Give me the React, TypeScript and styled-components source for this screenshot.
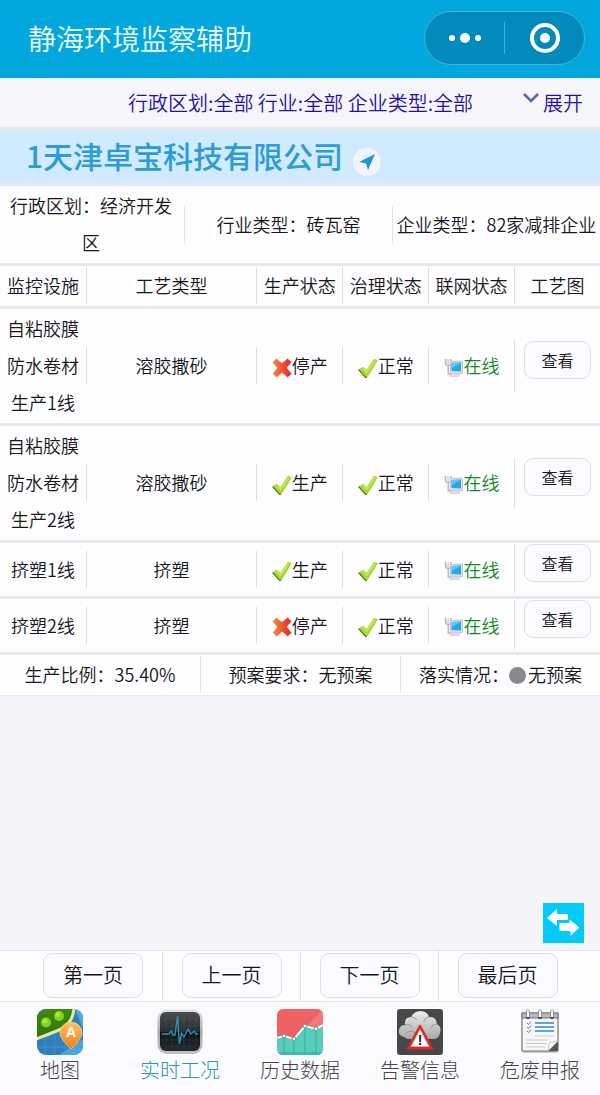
import React from "react";
import styled, { createGlobalStyle } from "styled-components";

const GlobalStyle = createGlobalStyle`
  * { box-sizing: border-box; }
  body {
    margin: 0;
    background: #f5f5f9;
    color: #17171a;
    font-family: "Noto Sans CJK SC", "Noto Sans", sans-serif;
    font-size: 18px;
    font-weight: 350;
    line-height: 37px;
  }
  button {
    font: inherit;
    color: inherit;
    padding: 0;
    cursor: pointer;
  }
  svg { display: block; flex: none; }
`;

const Page = styled.div`
  min-height: 100vh;
  display: flex;
  flex-direction: column;
`;

const Header = styled.header`
  height: 78px;
  padding: 0 15px 2px 28px;
  display: flex;
  align-items: center;
  justify-content: space-between;
  background: #02a7dd;
  color: #effaff;
`;

const AppName = styled.h1`
  margin: 0;
  font-size: 28px;
  font-weight: 350;
`;

const Capsule = styled.div`
  width: 161px;
  height: 54px;
  display: flex;
  align-items: center;
  border: 1px solid #3fb5dc;
  border-radius: 27px;
  background: #028abd;
`;

const CapsuleButton = styled.button`
  flex: 1;
  height: 32px;
  display: flex;
  align-items: center;
  justify-content: center;
  border: 0;
  background: none;

  & + & {
    border-left: 1px solid #3fb0d8;
  }
`;

const FilterBar = styled.div`
  height: 52px;
  padding: 0 17px 0 128px;
  display: flex;
  align-items: center;
  justify-content: space-between;
  border-bottom: 3px solid #e7e8ee;
  background: #f6f6fa;
  color: #2410a4;
  font-size: 20px;
  white-space: nowrap;
`;

const ExpandButton = styled.button`
  display: flex;
  align-items: center;
  gap: 4px;
  border: 0;
  background: none;

  svg { margin-bottom: 10px; }
`;

const CompanyBar = styled.div`
  height: 56px;
  padding: 0 26px 2px;
  display: flex;
  align-items: center;
  gap: 10px;
  border-bottom: 3px solid #e7e9ee;
  background: #d0eafe;
`;

const CompanyName = styled.h2`
  margin: 0;
  color: #2c9bd8;
  font-size: 30px;
  font-weight: 500;
`;

const LocateButton = styled.button`
  width: 28px;
  height: 28px;
  margin-top: 12px;
  display: flex;
  align-items: center;
  justify-content: center;
  border: 0;
  border-radius: 50%;
  background: #eff5fa;
`;

const InfoRow = styled.div<{ $columns: string; $line: number }>`
  padding: 1px 0 2px;
  display: grid;
  grid-template-columns: ${(p) => p.$columns};
  align-items: center;
  border-bottom: ${(p) => p.$line}px solid #e8e7eb;
  background: #fefdff;
`;

const InfoCell = styled.div<{ $wraps?: boolean }>`
  min-height: 37px;
  padding: ${(p) => (p.$wraps ? "0 8px 0 6px" : "0")};
  display: flex;
  align-items: center;
  justify-content: center;
  text-align: center;

  & + & {
    border-left: 1px solid #e3e2e7;
    white-space: nowrap;
  }
`;

const Dot = styled.span`
  width: 17px;
  height: 17px;
  margin: 2px 2px 0 0;
  border-radius: 50%;
  background: #89898c;
`;

const Table = styled.table`
  width: 100%;
  table-layout: fixed;
  border-collapse: collapse;
  background: #fefdff;

  tr { border-bottom: 3px solid #e8e7eb; }
  th, td {
    padding: 1px 0 2px;
    font-weight: 350;
    vertical-align: middle;
    text-align: center;
  }
`;

const CellBox = styled.div<{ $color?: string }>`
  display: flex;
  justify-content: center;
  align-items: center;
  color: ${(p) => p.$color ?? "inherit"};
  white-space: nowrap;

  td + td > &, th + th > & {
    border-left: 1px solid #dfdee3;
  }
  svg { margin-top: 4px; }
`;

const FacilityName = styled.div`
  padding: 0 6px;
`;

const ViewCell = styled(CellBox)`
  height: 50px;
  align-items: flex-start;
`;

const SoftButton = styled.button<{ $size: "small" | "large" }>`
  width: ${(p) => (p.$size === "small" ? 67 : 100)}px;
  height: ${(p) => (p.$size === "small" ? 38 : 45)}px;
  padding-bottom: ${(p) => (p.$size === "small" ? 0 : 2)}px;
  border: 1px solid #e0dfe6;
  border-radius: 9px;
  background: #fbfafe;
  font-size: ${(p) => (p.$size === "small" ? 16 : 20)}px;
`;

const Blank = styled.main`
  flex: 1;
  padding: 0 16px 7px;
  display: flex;
  align-items: flex-end;
  justify-content: flex-end;
`;

const SwapButton = styled.button`
  width: 41px;
  height: 40px;
  display: flex;
  align-items: center;
  justify-content: center;
  border: 0;
  background: #02cbf9;
`;

const Pager = styled.nav`
  padding: 0 24px;
  display: grid;
  grid-template-columns: repeat(4, 1fr);
  border-top: 1px solid #e5e4e9;
  border-bottom: 1px solid #e5e4e9;
  background: #fefdff;
`;

const PagerCell = styled.div`
  height: 50px;
  padding-bottom: 1px;
  display: flex;
  align-items: center;
  justify-content: center;

  & + & { border-left: 1px solid #e3e2e7; }
`;

const TabBar = styled.nav`
  padding: 7px 0 10px;
  display: grid;
  grid-template-columns: repeat(5, 1fr);
  background: #fbfafd;
`;

const Tab = styled.a<{ $active?: boolean }>`
  display: flex;
  flex-direction: column;
  align-items: center;
  color: ${(p) => (p.$active ? "#2c96b8" : "#454549")};
  font-size: 20px;
  font-weight: 300;
  line-height: 30px;
  text-decoration: none;
`;

const CrossIcon = () => (
  <svg width="20" height="20" viewBox="0 0 20 20" aria-hidden="true">
    <defs>
      <linearGradient id="cross" x1="0" x2="1">
        <stop offset="0" stopColor="#f28c4c" />
        <stop offset="1" stopColor="#e5261d" />
      </linearGradient>
    </defs>
    <path
      d="M.5 4.500 4.500 .5Q7 3.500 10 5 13 3 15.500 .5L19.500 4.200Q17 7 14.800 9.800 17 13 19.500 15.700L15.600 19.500Q12.500 16.500 10 14.800 7.500 17 4.700 19.500L.7 15.600Q3.500 12.500 5.300 10 3 7 .5 4.500Z"
      fill="url(#cross)"
    />
  </svg>
);

const CheckIcon = () => (
  <svg width="20" height="20" viewBox="0 0 20 20" aria-hidden="true">
    <path d="M.6 11.500 5 8.800 8.500 12 16 .8 19.800 2.300Q15 11 9.500 19L7.500 19.200Z" fill="#a6d92f" />
    <path d="M.6 11.500 7.500 19.300 9 19.300" fill="none" stroke="#4d7a22" strokeWidth="1.200" />
    <path d="M4.500 10.500 8.700 14.300 16.700 2.500" fill="none" stroke="#c3e85c" strokeWidth="1.600" />
  </svg>
);

const OnlineIcon = () => (
  <svg width="20" height="20" viewBox="0 0 20 20" aria-hidden="true">
    <path d="M1.500 1v4.500Q2 7.500 4.200 7.500T7 5.500V1M4.300 7.500V16H8" fill="none" stroke="#b8babf" strokeWidth="1.600" />
    <path d="M4.200 1v5" stroke="#d4d6da" strokeWidth="2" />
    <path d="M6.500 3.500 18.500 3v12.500L6.500 15Z" fill="#dfe3e8" stroke="#c3c7ce" />
    <path d="M7.500 5 17 4.500V13.500L7.500 13Z" fill="#27a7e8" />
    <path d="M7.500 5 17 4.500 7.500 10.500Z" fill="#63c7f4" />
    <path d="M5 16.500Q11 14.500 16 16.800L15 18.500H6Z" fill="#dddfe3" stroke="#c3c6cc" strokeWidth=".6" />
  </svg>
);

const MapIcon = () => (
  <svg width="46" height="46" viewBox="0 0 46 46" aria-hidden="true">
    <defs>
      <clipPath id="mapShape"><rect width="46" height="46" rx="9" /></clipPath>
      <linearGradient id="pin" x2="0" y2="1">
        <stop offset="0" stopColor="#fbc65e" />
        <stop offset="1" stopColor="#ef7a1c" />
      </linearGradient>
      <linearGradient id="land" x2="0" y2="1">
        <stop offset="0" stopColor="#3d8a12" />
        <stop offset="1" stopColor="#2e7410" />
      </linearGradient>
    </defs>
    <g clipPath="url(#mapShape)">
      <rect width="46" height="46" fill="#2f7fc0" />
      <path d="M22 46 46 30V46ZM38 0H46V20Z" fill="#4ba6dc" />
      <path d="M8 30V46M18 26V46M28 20V46M0 38H46" stroke="#5397ce" strokeWidth=".6" />
      <path d="M0 0H37Q36 15 22 21 10 26 0 30Z" fill="url(#land)" />
      <path d="M37-1Q36 15 22 21 10 26-1 30" fill="none" stroke="#ece89a" strokeWidth="3" />
      <circle cx="22" cy="7" r="5" fill="#85cf1e" />
      <circle cx="9" cy="13.500" r="5" fill="#85cf1e" />
      <circle cx="21" cy="5.500" r="2.500" fill="#a7e63c" />
      <circle cx="8" cy="12" r="2.500" fill="#a7e63c" />
    </g>
    <path d="M34 40Q23 30 23 24A11 11 0 0 1 45 24Q45 30 34 40Z" fill="url(#pin)" stroke="#f7d28b" strokeWidth=".7" />
    <text x="34" y="28" textAnchor="middle" fill="#fff" fontFamily="Liberation Sans, sans-serif" fontSize="14" fontWeight="700">A</text>
  </svg>
);

const PulseIcon = () => (
  <svg width="46" height="46" viewBox="0 0 46 46" aria-hidden="true">
    <defs>
      <linearGradient id="rim" x2="0" y2="1">
        <stop offset="0" stopColor="#e5e5e6" />
        <stop offset=".5" stopColor="#aaaaad" />
        <stop offset="1" stopColor="#c2c2c4" />
      </linearGradient>
      <linearGradient id="screen" x2="0" y2="1">
        <stop offset="0" stopColor="#4a4d50" />
        <stop offset=".5" stopColor="#282c2f" />
        <stop offset=".52" stopColor="#101417" />
        <stop offset="1" stopColor="#22282b" />
      </linearGradient>
    </defs>
    <rect x=".5" y=".5" width="45" height="44.500" rx="9" fill="url(#rim)" />
    <rect x="3" y="3" width="40" height="39" rx="6" fill="url(#screen)" />
    <path d="M9 4V41M15 4V41M21 4V41M27 4V41M33 4V41M39 4V41M4 10H42M4 17H42M4 31H42M4 37H42" stroke="#65717a" strokeWidth=".4" opacity=".5" />
    <path d="M5 25H12L14 22 16 26H18L20.500 7 22.500 35 24.500 24 27 28 31 20 34 25 37 22 39 25H41" fill="none" stroke="#2898b2" strokeWidth="1.300" />
  </svg>
);

const ChartIcon = () => (
  <svg width="46" height="46" viewBox="0 0 46 46" aria-hidden="true">
    <defs><clipPath id="chartShape"><rect width="46" height="46" rx="6" /></clipPath></defs>
    <g clipPath="url(#chartShape)">
      <rect width="46" height="46" fill="#ee6264" />
      <path d="M46 0V15L39 19 28 16 17 31Z" fill="#f0797a" />
      <path d="M0 29 7 27 17 30 28 17 39 20 46 16V46H0Z" fill="#58cdbb" />
      <path d="M7 27V45M17 30V45M28 17V45M39 20V45" stroke="#38ab9c" />
      <path d="M0 43H46V46H0Z" fill="#43b8a8" />
      <path d="M0 29 7 27 17 30 28 17 39 20 46 16" fill="none" stroke="#fff" strokeWidth="1.800" />
    </g>
    {[[7, 27], [17, 30], [28, 17], [39, 20]].map(([x, y]) => (
      <circle key={x} cx={x} cy={y} r="2" fill="#fff" stroke="#439e98" />
    ))}
  </svg>
);

const AlarmIcon = () => (
  <svg width="46" height="46" viewBox="0 0 46 46" aria-hidden="true">
    <defs>
      <linearGradient id="cloud" x2="0" y2="1">
        <stop offset="0" stopColor="#eeeeee" />
        <stop offset="1" stopColor="#a7a7a9" />
      </linearGradient>
    </defs>
    <rect width="46" height="46" rx="3" fill="#47474a" />
    <path d="M7 28Q1 27 2 21 3 16 8 16 7 8 14 8 17 2 24 2 31 3 32 8 39 7 40 15 45 18 43 24 42 30 36 30H12Q9 30 7 28Z" fill="url(#cloud)" />
    <path d="M8 16Q12 14 15 18M14 8Q18 8 20 11M32 8Q27 9 27 13M40 15Q35 15 34 19M9 24Q14 20 18 24" fill="none" stroke="#96969a" />
    <path d="M23 17 11 39.500H35Z" fill="#d52d2b" stroke="#d52d2b" strokeWidth="2.500" strokeLinejoin="round" />
    <path d="M23 20.500 14 37.500H32Z" fill="#fff" stroke="#efb4b1" strokeWidth=".7" />
    <text x="23" y="36" textAnchor="middle" fill="#151515" fontFamily="Liberation Sans, sans-serif" fontSize="14" fontWeight="700">!</text>
  </svg>
);

const ReportIcon = () => (
  <svg width="46" height="46" viewBox="0 0 46 46" aria-hidden="true">
    <path d="M6 43H40" stroke="#c9c9cc" strokeWidth="2" />
    <path d="M5 4H41V42H5Z" fill="#f7f7f8" stroke="#77777b" strokeWidth="1.200" />
    <path d="M5 4H41V9H5Z" fill="#b9b9bd" stroke="#747479" />
    <path d="M31 42 41 32V42Z" fill="#55555a" />
    <path d="M31 42 32.500 33.500 41 32Z" fill="#fff" stroke="#aaaaae" strokeWidth=".7" />
    {[11, 23, 35].map((x) => (
      <g key={x}>
        <circle cx={x} cy="8" r="2.200" fill="#55555a" />
        <path d={`M${x - 1.5} 8V2Q${x} -1 ${x + 1.5} 2V8`} fill="#f4f4f4" stroke="#929297" />
      </g>
    ))}
    {[14, 18, 22].map((y) => (
      <g key={y}>
        <path d={`M10 ${y}L11.500 ${y + 1.500} 14 ${y - 1.500}`} fill="none" stroke="#77777c" />
        <path d={`M18 ${y}H37`} stroke="#4b9bdd" strokeWidth="1.800" />
      </g>
    ))}
    <path d="M18 27H37M9 31H31M9 34.500H30M9 38H28" stroke="#bebec2" strokeWidth=".8" />
  </svg>
);

type Facility = { name: string; process: string; running: boolean };

const facilities: Facility[] = [
  { name: "自粘胶膜防水卷材生产1线", process: "溶胶撒砂", running: false },
  { name: "自粘胶膜防水卷材生产2线", process: "溶胶撒砂", running: true },
  { name: "挤塑1线", process: "挤塑", running: true },
  { name: "挤塑2线", process: "挤塑", running: false },
];

const columns = ["监控设施", "工艺类型", "生产状态", "治理状态", "联网状态", "工艺图"];

const tabs = [
  { label: "地图", Icon: MapIcon },
  { label: "实时工况", Icon: PulseIcon },
  { label: "历史数据", Icon: ChartIcon },
  { label: "告警信息", Icon: AlarmIcon },
  { label: "危废申报", Icon: ReportIcon },
];

export default function App() {
  return (
    <Page>
      <GlobalStyle />
      <Header>
        <AppName>静海环境监察辅助</AppName>
        <Capsule>
          <CapsuleButton aria-label="更多">
            <svg width="34" height="12" viewBox="0 0 34 12" fill="#fff">
              <circle cx="4" cy="6" r="3" />
              <circle cx="17" cy="6" r="5" />
              <circle cx="30" cy="6" r="3" />
            </svg>
          </CapsuleButton>
          <CapsuleButton aria-label="关闭">
            <svg width="30" height="30" viewBox="0 0 30 30">
              <circle cx="15" cy="15" r="13" fill="none" stroke="#fff" strokeWidth="4" />
              <circle cx="15" cy="15" r="5" fill="#fff" />
            </svg>
          </CapsuleButton>
        </Capsule>
      </Header>

      <FilterBar>
        <span>行政区划:全部 行业:全部 企业类型:全部</span>
        <ExpandButton>
          <svg width="16" height="10" viewBox="0 0 16 10" fill="none" stroke="#5564b8" strokeWidth="2.500">
            <path d="M1 1 8 8 15 1" />
          </svg>
          展开
        </ExpandButton>
      </FilterBar>

      <CompanyBar>
        <CompanyName>1天津卓宝科技有限公司</CompanyName>
        <LocateButton aria-label="定位">
          <svg width="18" height="18" viewBox="0 0 18 18" fill="#1f96d6">
            <path d="M17 1 1 9 8 10.500 10 17Z" />
          </svg>
        </LocateButton>
      </CompanyBar>

      <InfoRow $columns="184fr 208fr 208fr" $line={3}>
        <InfoCell $wraps>行政区划：经济开发区</InfoCell>
        <InfoCell>行业类型：砖瓦窑</InfoCell>
        <InfoCell>企业类型：82家减排企业</InfoCell>
      </InfoRow>

      <Table>
        <colgroup>
          <col />
          <col width="28.4%" />
          <col />
          <col />
          <col />
          <col />
        </colgroup>
        <thead>
          <tr>
            {columns.map((c) => (
              <th key={c} scope="col"><CellBox>{c}</CellBox></th>
            ))}
          </tr>
        </thead>
        <tbody>
          {facilities.map((f) => (
            <tr key={f.name}>
              <td><FacilityName>{f.name}</FacilityName></td>
              <td><CellBox>{f.process}</CellBox></td>
              <td>
                <CellBox>
                  {f.running ? <CheckIcon /> : <CrossIcon />}
                  {f.running ? "生产" : "停产"}
                </CellBox>
              </td>
              <td><CellBox><CheckIcon />正常</CellBox></td>
              <td><CellBox $color="#158a1c"><OnlineIcon />在线</CellBox></td>
              <td><ViewCell><SoftButton $size="small">查看</SoftButton></ViewCell></td>
            </tr>
          ))}
        </tbody>
      </Table>

      <InfoRow $columns="1fr 1fr 1fr" $line={1}>
        <InfoCell>生产比例：35.40%</InfoCell>
        <InfoCell>预案要求：无预案</InfoCell>
        <InfoCell>落实情况：<Dot />无预案</InfoCell>
      </InfoRow>

      <Blank>
        <SwapButton aria-label="切换">
          <svg width="33" height="28" viewBox="0 0 33 28" fill="#fff">
            <path d="M0 9 10 0V5H21V11H10V17Z" />
            <path d="M12 13.500H22V9.500L33 18.500 23 28V22.500H12Z" stroke="#02cbf9" strokeWidth="1" />
          </svg>
        </SwapButton>
      </Blank>

      <Pager aria-label="分页">
        {["第一页", "上一页", "下一页", "最后页"].map((label) => (
          <PagerCell key={label}><SoftButton $size="large">{label}</SoftButton></PagerCell>
        ))}
      </Pager>

      <TabBar>
        {tabs.map(({ label, Icon }) => (
          <Tab key={label} href="#" $active={label === "实时工况"}>
            <Icon />
            {label}
          </Tab>
        ))}
      </TabBar>
    </Page>
  );
}
